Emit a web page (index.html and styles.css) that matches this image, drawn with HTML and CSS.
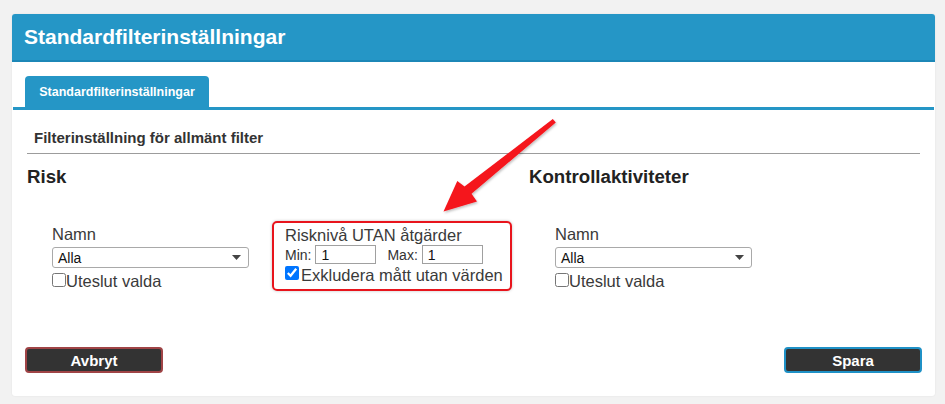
FILE: index.html
```html
<!DOCTYPE html>
<html lang="sv">
<head>
<meta charset="utf-8">
<title>Standardfilterinställningar</title>
<link rel="stylesheet" href="styles.css">
</head>
<body>
<div class="panel">
  <div class="header"><h1 class="title">Standardfilterinställningar</h1></div>
  <div class="tabs"><div class="tab">Standardfilterinställningar</div></div>
  <div class="content">
    <div class="section-title">Filterinställning för allmänt filter</div>
    <div class="columns">
      <div class="col">
        <h2 class="col-title">Risk</h2>
        <div class="filters">
          <div class="field">
            <div class="label">Namn</div>
            <div class="select"><span>Alla</span><svg class="caret" width="9" height="5" viewBox="0 0 9 5"><polygon points="0,0 9,0 4.5,5" fill="#444"/></svg></div>
            <label class="check"><input type="checkbox" class="cb">Uteslut valda</label>
          </div>
          <div class="redbox">
            <div class="label">Risknivå UTAN åtgärder</div>
            <div class="range">
              <span class="small">Min:</span><input class="num" type="text" value="1">
              <span class="small max">Max:</span><input class="num" type="text" value="1">
            </div>
            <label class="check check2"><input type="checkbox" class="cb" checked>Exkludera mått utan värden</label>
          </div>
        </div>
      </div>
      <div class="col">
        <h2 class="col-title">Kontrollaktiviteter</h2>
        <div class="filters filters2">
          <div class="field">
            <div class="label">Namn</div>
            <div class="select"><span>Alla</span><svg class="caret" width="9" height="5" viewBox="0 0 9 5"><polygon points="0,0 9,0 4.5,5" fill="#444"/></svg></div>
            <label class="check"><input type="checkbox" class="cb">Uteslut valda</label>
          </div>
        </div>
      </div>
    </div>
  </div>
  <div class="actions">
    <button class="btn btn-cancel">Avbryt</button>
    <button class="btn btn-save">Spara</button>
  </div>
</div>
<svg class="arrow" width="945" height="404" viewBox="0 0 945 404">
  <defs>
    <filter id="sh" x="-20%" y="-20%" width="140%" height="140%">
      <feDropShadow dx="1" dy="1.5" stdDeviation="1.2" flood-color="#000" flood-opacity="0.25"/>
    </filter>
  </defs>
  <polygon filter="url(#sh)" fill="#f5141c" points="552.8,119.1 555.8,122.4 471.5,193.8 477,201.5 443.5,211.5 457.3,181 464.5,186.6"/>
</svg>
</body>
</html>
```
FILE: styles.css
```css
html, body {
  margin: 0;
  padding: 0;
}
body {
  background: #f2f2f2;
  font-family: "Liberation Sans", Arial, sans-serif;
  color: #333;
  width: 945px;
  height: 404px;
  overflow: hidden;
  position: relative;
}
.panel {
  margin: 14px 0 0 12px;
  width: 923px;
  height: 382px;
  background: #fff;
  border-radius: 3px;
  box-shadow: 0 0 2px rgba(0,0,0,0.08);
  display: flex;
  flex-direction: column;
}
.header {
  height: 46px;
  background: #2596c6;
  border-bottom: 2px solid #1c87b7;
  border-radius: 3px 3px 0 0;
  display: flex;
  align-items: center;
  padding-left: 12px;
}
.title {
  margin: 0;
  font-size: 21px;
  line-height: 24px;
  font-weight: bold;
  color: #fff;
}
.tabs {
  margin: 14px 1px 0 1px;
  padding-left: 12px;
  border-bottom: 3px solid #2596c6;
  display: flex;
}
.tab {
  width: 184px;
  height: 31px;
  box-sizing: border-box;
  padding-top: 1px;
  line-height: 30px;
  background: #2596c6;
  border-radius: 4px 4px 0 0;
  color: #fff;
  font-size: 12.5px;
  font-weight: bold;
  text-align: center;
}
.content {
  padding: 0 15px;
}
.section-title {
  font-size: 15px;
  line-height: 17px;
  font-weight: bold;
  color: #333;
  padding: 19px 7px 7px;
  border-bottom: 1px solid #9c9c9c;
}
.columns {
  display: grid;
  grid-template-columns: 502px 1fr;
}
.col-title {
  margin: 12px 0 0 0;
  font-size: 18.67px;
  line-height: 22px;
  font-weight: bold;
  color: #222;
}
.filters {
  display: flex;
  align-items: flex-start;
  margin-top: 33px;
  padding-left: 25px;
}
.filters2 {
  padding-left: 26px;
}
.field {
  margin-top: 4px;
  width: 197px;
}
.label {
  font-size: 16.5px;
  line-height: 18px;
  color: #3a3a3a;
}
.select {
  margin-top: 4px;
  height: 21px;
  box-sizing: border-box;
  border: 1px solid #a9a9a9;
  border-radius: 3px;
  display: flex;
  align-items: center;
  justify-content: space-between;
  padding: 0 7px 0 5px;
  font-size: 14px;
  color: #111;
}
.caret {
  display: block;
}
.check {
  display: flex;
  align-items: flex-start;
  font-size: 16.5px;
  line-height: 18px;
  color: #3a3a3a;
  margin-top: 4px;
}
.cb {
  width: 14px;
  height: 14px;
  margin: 1px 0 0 0;
  flex: none;
}
.check2 {
  margin-top: 2px;
}
.check2 .cb {
  margin: 0 2px 0 0;
}
.redbox {
  margin-left: 23px;
  border: 2px solid #e8141c;
  border-radius: 5px;
  padding: 3px 7px 5px 11px;
  box-shadow: 0 0 3px rgba(0,0,0,0.25);
}
.range {
  display: flex;
  align-items: center;
  height: 19px;
  margin-top: 1px;
}
.small {
  font-size: 14px;
  color: #333;
}
.max {
  margin-left: 11px;
}
.num {
  width: 61px;
  height: 19px;
  box-sizing: border-box;
  margin: 0 0 0 4px;
  border: 1px solid #a0a0a0;
  padding: 0 0 0 5px;
  font-family: "Liberation Sans", Arial, sans-serif;
  font-size: 14px;
  color: #111;
  outline: none;
}
.actions {
  margin-top: auto;
  padding: 0 13px 23px;
  display: flex;
  justify-content: space-between;
}
.btn {
  width: 138px;
  height: 26px;
  box-sizing: border-box;
  background: #333;
  color: #fff;
  font-family: "Liberation Sans", Arial, sans-serif;
  font-size: 15px;
  font-weight: bold;
  border-radius: 4px;
  padding: 0;
}
.btn-cancel {
  border: 2px solid #a04446;
}
.btn-save {
  border: 2px solid #1f91c6;
}
.arrow {
  position: absolute;
  left: 0;
  top: 0;
  pointer-events: none;
}
```
